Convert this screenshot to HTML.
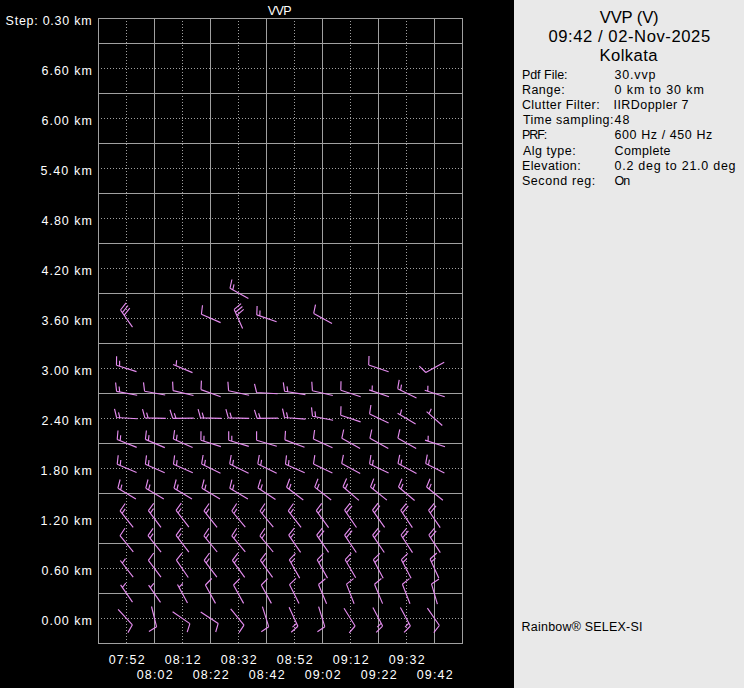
<!DOCTYPE html>
<html><head><meta charset="utf-8"><style>
html,body{margin:0;padding:0;}
body{width:744px;height:688px;background:#000;position:relative;overflow:hidden;font-family:"Liberation Sans",sans-serif;}
#panel{position:absolute;left:514px;top:0;width:230px;height:688px;background:#e9e9e9;}
svg{position:absolute;left:0;top:0;}
.s{stroke:#a0a0a0;stroke-width:1;}
.d{stroke:#a0a0a0;stroke-width:1;stroke-dasharray:1 2;}
.b{stroke:#e48cee;stroke-width:1.15;fill:none;}
.t{position:absolute;white-space:nowrap;}
</style></head><body>
<div id="panel"></div>
<svg width="744" height="688" viewBox="0 0 744 688" shape-rendering="crispEdges">
<line x1="98.5" y1="18" x2="98.5" y2="644" class="s"/>
<line x1="154.5" y1="18" x2="154.5" y2="644" class="s"/>
<line x1="210.5" y1="18" x2="210.5" y2="644" class="s"/>
<line x1="266.5" y1="18" x2="266.5" y2="644" class="s"/>
<line x1="322.5" y1="18" x2="322.5" y2="644" class="s"/>
<line x1="378.5" y1="18" x2="378.5" y2="644" class="s"/>
<line x1="434.5" y1="18" x2="434.5" y2="644" class="s"/>
<line x1="462.5" y1="18" x2="462.5" y2="644" class="s"/>
<line x1="98" y1="18.5" x2="463" y2="18.5" class="s"/>
<line x1="98" y1="43.5" x2="463" y2="43.5" class="s"/>
<line x1="98" y1="93.5" x2="463" y2="93.5" class="s"/>
<line x1="98" y1="143.5" x2="463" y2="143.5" class="s"/>
<line x1="98" y1="193.5" x2="463" y2="193.5" class="s"/>
<line x1="98" y1="243.5" x2="463" y2="243.5" class="s"/>
<line x1="98" y1="293.5" x2="463" y2="293.5" class="s"/>
<line x1="98" y1="343.5" x2="463" y2="343.5" class="s"/>
<line x1="98" y1="393.5" x2="463" y2="393.5" class="s"/>
<line x1="98" y1="443.5" x2="463" y2="443.5" class="s"/>
<line x1="98" y1="493.5" x2="463" y2="493.5" class="s"/>
<line x1="98" y1="543.5" x2="463" y2="543.5" class="s"/>
<line x1="98" y1="593.5" x2="463" y2="593.5" class="s"/>
<line x1="98" y1="643.5" x2="463" y2="643.5" class="s"/>
<line x1="126.5" y1="21" x2="126.5" y2="643" class="d"/>
<line x1="182.5" y1="21" x2="182.5" y2="643" class="d"/>
<line x1="238.5" y1="21" x2="238.5" y2="643" class="d"/>
<line x1="294.5" y1="21" x2="294.5" y2="643" class="d"/>
<line x1="350.5" y1="21" x2="350.5" y2="643" class="d"/>
<line x1="406.5" y1="21" x2="406.5" y2="643" class="d"/>
<line x1="101" y1="68.5" x2="462" y2="68.5" class="d"/>
<line x1="101" y1="118.5" x2="462" y2="118.5" class="d"/>
<line x1="101" y1="168.5" x2="462" y2="168.5" class="d"/>
<line x1="101" y1="218.5" x2="462" y2="218.5" class="d"/>
<line x1="101" y1="268.5" x2="462" y2="268.5" class="d"/>
<line x1="101" y1="318.5" x2="462" y2="318.5" class="d"/>
<line x1="101" y1="368.5" x2="462" y2="368.5" class="d"/>
<line x1="101" y1="418.5" x2="462" y2="418.5" class="d"/>
<line x1="101" y1="468.5" x2="462" y2="468.5" class="d"/>
<line x1="101" y1="518.5" x2="462" y2="518.5" class="d"/>
<line x1="101" y1="568.5" x2="462" y2="568.5" class="d"/>
<line x1="101" y1="618.5" x2="462" y2="618.5" class="d"/>
</svg>
<svg width="744" height="688" viewBox="0 0 744 688">
<path class="b" d="M230.0 288.3L248.4 298.5M230.0 288.3l1.9 -8.8M232.8 289.8l1.2 -5.4"/>
<path class="b" d="M120.5 310.0L132.5 327.2M120.5 310.0l5.6 -7.1M122.4 312.6l5.6 -7.1M124.2 315.2l5.6 -7.1"/>
<path class="b" d="M201.4 314.2L220.6 322.6M201.4 314.2l1.1 -8.9"/>
<path class="b" d="M234.2 309.4L242.6 328.6M234.2 309.4l6.9 -5.8M235.5 312.3l6.9 -5.8M236.8 315.2l6.9 -5.8"/>
<path class="b" d="M256.8 314.9L276.6 321.7M256.8 314.9l0.3 -9.0M259.8 315.9l0.2 -5.5"/>
<path class="b" d="M313.7 313.4L332.0 323.5M313.7 313.4l1.8 -8.8"/>
<path class="b" d="M116.5 365.3L136.5 371.6M116.5 365.3l0.1 -9.0M119.6 366.3l0.0 -5.5"/>
<path class="b" d="M173.1 364.5L192.5 372.6M176.1 365.8l0.5 -5.5"/>
<path class="b" d="M368.7 365.0L388.6 371.8M368.7 365.0l0.3 -9.0"/>
<path class="b" d="M425.8 372.5L444.2 362.3M425.8 372.5l-6.5 -6.3"/>
<path class="b" d="M116.6 391.4L137.2 395.2M116.6 391.4l-1.0 -8.9M119.7 392.0l-0.6 -5.5"/>
<path class="b" d="M144.6 391.3L165.2 395.0M144.6 391.3l-1.1 -8.9"/>
<path class="b" d="M173.1 390.6L193.5 395.5M173.1 390.6l-0.5 -9.0"/>
<path class="b" d="M201.0 389.6L220.7 396.7M201.0 389.6l0.4 -9.0"/>
<path class="b" d="M228.6 390.8L249.1 395.2M228.6 390.8l-0.7 -9.0"/>
<path class="b" d="M256.6 392.5L277.6 393.8M256.6 392.5l-2.1 -8.7"/>
<path class="b" d="M284.6 391.3L305.4 394.6M284.6 391.3l-1.3 -8.9M287.8 391.8l-0.8 -5.4"/>
<path class="b" d="M312.4 390.8L332.8 395.5M312.4 390.8l-0.6 -9.0"/>
<path class="b" d="M340.8 390.2L360.7 396.7M340.8 390.2l0.2 -9.0"/>
<path class="b" d="M369.1 389.9L389.0 396.7M372.1 390.9l0.2 -5.5"/>
<path class="b" d="M397.7 388.7L416.5 398.0M397.7 388.7l1.5 -8.9M400.6 390.1l0.9 -5.4"/>
<path class="b" d="M424.7 390.2L444.7 396.7M427.8 391.2l0.1 -5.5"/>
<path class="b" d="M116.6 417.5L137.5 418.7M116.6 417.5l-2.1 -8.7M119.8 417.7l-1.3 -5.3"/>
<path class="b" d="M144.9 417.9L165.8 418.4M144.9 417.9l-2.4 -8.7M148.1 418.0l-1.5 -5.3"/>
<path class="b" d="M172.8 418.4L193.8 418.1M172.8 418.4l-2.8 -8.6M176.0 418.4l-1.7 -5.2"/>
<path class="b" d="M200.5 417.9L221.5 418.4M200.5 417.9l-2.4 -8.7M203.7 418.0l-1.5 -5.3"/>
<path class="b" d="M228.3 417.9L249.2 418.4M228.3 417.9l-2.4 -8.7M231.5 418.0l-1.5 -5.3"/>
<path class="b" d="M257.1 418.4L278.1 418.1M257.1 418.4l-2.7 -8.6M260.3 418.4l-1.7 -5.2"/>
<path class="b" d="M284.5 417.5L305.5 419.1M284.5 417.5l-2.0 -8.8M287.7 417.7l-1.2 -5.4"/>
<path class="b" d="M312.5 416.3L333.1 420.3M312.5 416.3l-1.0 -8.9M315.6 416.9l-0.6 -5.5"/>
<path class="b" d="M340.7 415.2L360.6 421.9M340.7 415.2l0.3 -9.0"/>
<path class="b" d="M369.6 413.9L388.6 423.0M369.6 413.9l1.3 -8.9"/>
<path class="b" d="M397.6 413.2L415.6 423.9M400.3 414.8l1.3 -5.3"/>
<path class="b" d="M426.6 411.6L442.3 425.5M429.0 413.7l2.3 -5.0"/>
<path class="b" d="M117.2 439.5L136.7 447.4M117.2 439.5l0.8 -9.0M120.2 440.7l0.5 -5.5"/>
<path class="b" d="M145.4 439.4L164.8 447.6M145.4 439.4l1.0 -8.9M148.4 440.6l0.6 -5.5"/>
<path class="b" d="M173.4 439.0L192.6 447.6M173.4 439.0l1.2 -8.9M176.4 440.3l0.7 -5.5"/>
<path class="b" d="M200.9 440.3L220.9 446.6M200.9 440.3l0.1 -9.0M203.9 441.2l0.1 -5.5"/>
<path class="b" d="M228.7 440.2L248.8 446.4M228.7 440.2l0.0 -9.0M231.8 441.2l0.0 -5.5"/>
<path class="b" d="M256.6 440.3L276.8 446.3M256.6 440.3l-0.0 -9.0"/>
<path class="b" d="M284.9 439.9L304.5 447.3M284.9 439.9l0.6 -9.0"/>
<path class="b" d="M313.4 438.9L332.5 447.7M313.4 438.9l1.2 -8.9"/>
<path class="b" d="M341.8 438.3L360.1 448.4M341.8 438.3l1.9 -8.8"/>
<path class="b" d="M369.9 438.3L388.3 448.4M369.9 438.3l1.9 -8.8"/>
<path class="b" d="M397.9 438.2L416.2 448.5M397.9 438.2l1.9 -8.8"/>
<path class="b" d="M425.0 440.1L445.0 446.8M428.1 441.2l0.1 -5.5"/>
<path class="b" d="M117.2 464.2L136.6 472.5M117.2 464.2l1.0 -8.9M120.2 465.5l0.6 -5.5"/>
<path class="b" d="M145.4 464.3L164.7 472.7M145.4 464.3l1.1 -8.9M148.4 465.6l0.6 -5.5"/>
<path class="b" d="M173.5 464.3L192.8 472.7M173.5 464.3l1.1 -8.9M176.5 465.6l0.6 -5.5"/>
<path class="b" d="M201.6 463.9L220.5 473.2M201.6 463.9l1.5 -8.9M204.5 465.3l0.9 -5.4"/>
<path class="b" d="M229.7 463.9L248.6 473.2M229.7 463.9l1.5 -8.9M232.6 465.3l0.9 -5.4"/>
<path class="b" d="M257.8 463.9L276.7 473.2M257.8 463.9l1.5 -8.9M260.7 465.3l0.9 -5.4"/>
<path class="b" d="M285.5 464.3L304.7 472.7M285.5 464.3l1.0 -8.9M288.4 465.6l0.6 -5.5"/>
<path class="b" d="M313.5 464.0L332.4 472.9M313.5 464.0l1.3 -8.9"/>
<path class="b" d="M341.7 463.6L360.2 473.5M341.7 463.6l1.7 -8.8"/>
<path class="b" d="M369.6 463.9L388.6 473.0M369.6 463.9l1.3 -8.9M372.5 465.3l0.8 -5.4"/>
<path class="b" d="M398.0 463.6L416.5 473.5M398.0 463.6l1.7 -8.8M400.8 465.1l1.0 -5.4"/>
<path class="b" d="M425.7 463.6L444.4 473.1M425.7 463.6l1.6 -8.9M428.5 465.0l0.9 -5.4"/>
<path class="b" d="M117.9 488.2L135.9 499.1M117.9 488.2l2.2 -8.7M120.6 489.9l1.3 -5.3"/>
<path class="b" d="M145.8 488.2L163.8 499.1M145.8 488.2l2.2 -8.7M148.6 489.8l1.4 -5.3"/>
<path class="b" d="M174.0 488.2L192.0 499.1M174.0 488.2l2.2 -8.7M176.8 489.8l1.4 -5.3"/>
<path class="b" d="M201.9 488.2L220.0 499.1M201.9 488.2l2.2 -8.7M204.7 489.9l1.3 -5.3"/>
<path class="b" d="M229.8 488.3L247.9 499.0M229.8 488.3l2.1 -8.7M232.6 489.9l1.3 -5.3"/>
<path class="b" d="M258.0 487.9L275.5 499.6M258.0 487.9l2.6 -8.6M260.7 489.7l1.6 -5.3"/>
<path class="b" d="M286.6 487.3L303.3 500.0M286.6 487.3l3.1 -8.5M289.1 489.2l1.9 -5.2"/>
<path class="b" d="M314.7 487.1L331.2 500.0M314.7 487.1l3.3 -8.4M317.2 489.0l2.0 -5.1"/>
<path class="b" d="M343.0 486.7L358.9 500.4M343.0 486.7l3.6 -8.3M345.4 488.8l2.2 -5.0"/>
<path class="b" d="M370.5 487.0L386.9 500.1M370.5 487.0l3.3 -8.4M373.0 489.0l2.0 -5.1"/>
<path class="b" d="M398.5 487.0L414.6 500.5M398.5 487.0l3.5 -8.3M400.9 489.1l2.1 -5.1"/>
<path class="b" d="M426.6 487.0L442.9 500.3M426.6 487.0l3.4 -8.3M429.1 489.0l2.1 -5.1"/>
<path class="b" d="M120.1 510.9L133.2 527.3M120.1 510.9l5.1 -7.4M122.1 513.4l3.1 -4.5"/>
<path class="b" d="M148.4 510.6L161.0 527.3M148.4 510.6l5.3 -7.3M150.3 513.1l3.2 -4.4"/>
<path class="b" d="M176.1 510.4L188.9 527.1M176.1 510.4l5.2 -7.3M178.0 513.0l3.2 -4.5"/>
<path class="b" d="M204.0 510.9L217.1 527.3M204.0 510.9l5.1 -7.4M206.0 513.4l3.1 -4.6"/>
<path class="b" d="M231.8 511.0L245.3 527.2M231.8 511.0l4.9 -7.5M233.9 513.5l3.0 -4.6"/>
<path class="b" d="M260.0 511.0L273.3 527.2M260.0 511.0l5.0 -7.5M262.0 513.4l3.1 -4.6"/>
<path class="b" d="M288.3 510.8L301.1 527.4M288.3 510.8l5.2 -7.3M290.3 513.3l3.2 -4.5"/>
<path class="b" d="M316.3 510.6L328.6 527.6M316.3 510.6l5.4 -7.2M318.2 513.2l3.3 -4.4"/>
<path class="b" d="M344.6 510.1L356.5 527.5M344.6 510.1l5.6 -7.0M346.4 512.8l5.6 -7.0"/>
<path class="b" d="M372.5 510.2L384.6 527.4M372.5 510.2l5.5 -7.1M374.4 512.8l5.5 -7.1"/>
<path class="b" d="M400.7 510.3L412.4 527.6M400.7 510.3l5.7 -7.0M402.5 512.9l5.7 -7.0"/>
<path class="b" d="M428.5 510.3L440.2 527.6M428.5 510.3l5.7 -7.0M430.3 512.9l5.7 -7.0"/>
<path class="b" d="M120.0 535.7L133.3 551.8M120.0 535.7l5.0 -7.5"/>
<path class="b" d="M148.0 535.7L161.1 552.1M148.0 535.7l5.1 -7.4M150.0 538.2l3.1 -4.5"/>
<path class="b" d="M176.1 535.4L188.9 552.1M176.1 535.4l5.2 -7.3M178.0 538.0l3.2 -4.5"/>
<path class="b" d="M203.9 535.8L217.2 552.0M203.9 535.8l5.0 -7.5M205.9 538.3l3.0 -4.6"/>
<path class="b" d="M231.8 535.9L245.3 551.9M231.8 535.9l4.9 -7.6M233.8 538.3l3.0 -4.6"/>
<path class="b" d="M259.9 535.8L273.2 552.0M259.9 535.8l5.0 -7.5M261.9 538.3l3.0 -4.6"/>
<path class="b" d="M288.7 535.2L300.6 552.4M288.7 535.2l5.6 -7.1M290.5 537.8l3.4 -4.3"/>
<path class="b" d="M316.7 535.2L328.6 552.4M316.7 535.2l5.6 -7.1M318.5 537.8l5.6 -7.1"/>
<path class="b" d="M344.6 535.1L356.3 552.5M344.6 535.1l5.7 -7.0M346.4 537.7l5.7 -7.0"/>
<path class="b" d="M372.6 535.1L384.3 552.5M372.6 535.1l5.7 -7.0M374.4 537.7l5.7 -7.0"/>
<path class="b" d="M401.0 535.0L412.5 552.6M401.0 535.0l5.7 -6.9M402.7 537.7l5.7 -6.9"/>
<path class="b" d="M428.8 535.0L440.3 552.6M428.8 535.0l5.7 -6.9M430.5 537.7l5.7 -6.9"/>
<path class="b" d="M120.3 560.5L133.2 577.1M122.3 563.1l3.2 -4.5"/>
<path class="b" d="M148.4 560.3L161.0 577.1M148.4 560.3l5.3 -7.3"/>
<path class="b" d="M176.4 560.2L188.3 577.5M176.4 560.2l5.6 -7.1"/>
<path class="b" d="M204.2 560.3L216.9 577.1M204.2 560.3l5.3 -7.3M206.2 562.9l3.2 -4.4"/>
<path class="b" d="M232.4 560.3L244.7 577.4M232.4 560.3l5.5 -7.1M234.3 562.9l3.3 -4.4"/>
<path class="b" d="M260.4 560.3L272.6 577.4M260.4 560.3l5.5 -7.1M262.3 562.9l3.4 -4.4"/>
<path class="b" d="M289.3 559.8L299.7 578.1M289.3 559.8l6.2 -6.5M290.9 562.6l3.8 -4.0"/>
<path class="b" d="M317.2 559.8L327.5 578.1M317.2 559.8l6.2 -6.5M318.8 562.6l3.8 -4.0"/>
<path class="b" d="M345.2 559.7L355.7 577.8M345.2 559.7l6.1 -6.6M346.8 562.4l3.7 -4.0"/>
<path class="b" d="M373.4 559.7L383.2 578.2M373.4 559.7l6.4 -6.4M374.9 562.5l3.9 -3.9"/>
<path class="b" d="M401.4 559.7L411.1 578.2M401.4 559.7l6.4 -6.3M402.9 562.5l3.9 -3.9"/>
<path class="b" d="M430.1 559.0L438.8 578.1M430.1 559.0l6.7 -6.0M431.4 561.9l4.1 -3.7"/>
<path class="b" d="M120.6 584.9L132.5 602.2M122.4 587.5l3.4 -4.3"/>
<path class="b" d="M148.6 585.1L160.5 602.4M150.4 587.7l3.4 -4.3"/>
<path class="b" d="M177.5 584.6L187.5 603.0M179.0 587.4l3.8 -3.9"/>
<path class="b" d="M205.4 585.0L215.5 603.4M205.4 585.0l6.3 -6.5"/>
<path class="b" d="M233.5 585.0L243.6 603.4M233.5 585.0l6.3 -6.4"/>
<path class="b" d="M261.3 585.0L271.4 603.4M261.3 585.0l6.3 -6.4"/>
<path class="b" d="M289.5 584.6L299.0 603.4M289.5 584.6l6.5 -6.3"/>
<path class="b" d="M318.5 584.5L326.6 603.8M318.5 584.5l6.9 -5.8"/>
<path class="b" d="M346.5 584.1L354.1 603.8M346.5 584.1l7.1 -5.5"/>
<path class="b" d="M374.5 584.3L382.6 603.6M374.5 584.3l6.9 -5.8"/>
<path class="b" d="M402.4 584.2L410.0 603.7M402.4 584.2l7.0 -5.6"/>
<path class="b" d="M431.5 583.9L437.4 604.1M431.5 583.9l7.5 -5.0"/>
<path class="b" d="M132.4 624.8L118.1 609.4M132.4 624.8l-4.5 7.8"/>
<path class="b" d="M156.6 626.8L151.5 606.5M156.6 626.8l-7.7 4.6"/>
<path class="b" d="M189.9 623.6L172.6 611.7M189.9 623.6l-2.7 8.6"/>
<path class="b" d="M218.2 623.4L200.7 611.9M218.2 623.4l-2.5 8.6"/>
<path class="b" d="M244.0 625.1L230.7 608.8M244.0 625.1l-5.0 7.5"/>
<path class="b" d="M268.7 626.7L262.4 606.7M268.7 626.7l-7.4 5.1"/>
<path class="b" d="M297.9 626.3L289.1 607.3M297.9 626.3l-6.7 6.0M296.6 623.4l-4.1 3.7"/>
<path class="b" d="M324.8 626.7L318.6 606.7M324.8 626.7l-7.4 5.1"/>
<path class="b" d="M355.1 626.0L344.0 608.2M355.1 626.0l-5.9 6.8"/>
<path class="b" d="M382.6 626.1L372.9 607.5M382.6 626.1l-6.4 6.3M381.1 623.3l-3.9 3.8"/>
<path class="b" d="M410.4 626.0L400.4 607.6M410.4 626.0l-6.3 6.4M408.9 623.2l-3.9 3.9"/>
<path class="b" d="M439.4 625.5L427.4 608.2M439.4 625.5l-5.6 7.1"/>
</svg>
<div class="t" id="t0" style="top:14px;left:5.60px;font-size:12.48px;line-height:14px;color:#fff;letter-spacing:0.751px">Step: 0.30 km</div>
<div class="t" id="t1" style="top:64px;left:41.50px;font-size:12.48px;line-height:14px;color:#fff;letter-spacing:0.999px">6.60 km</div>
<div class="t" id="t2" style="top:114px;left:41.50px;font-size:12.48px;line-height:14px;color:#fff;letter-spacing:0.999px">6.00 km</div>
<div class="t" id="t3" style="top:164px;left:40.50px;font-size:12.48px;line-height:14px;color:#fff;letter-spacing:1.166px">5.40 km</div>
<div class="t" id="t4" style="top:214px;left:41.50px;font-size:12.48px;line-height:14px;color:#fff;letter-spacing:0.999px">4.80 km</div>
<div class="t" id="t5" style="top:264px;left:41.50px;font-size:12.48px;line-height:14px;color:#fff;letter-spacing:0.999px">4.20 km</div>
<div class="t" id="t6" style="top:314px;left:41.50px;font-size:12.48px;line-height:14px;color:#fff;letter-spacing:0.999px">3.60 km</div>
<div class="t" id="t7" style="top:364px;left:41.50px;font-size:12.48px;line-height:14px;color:#fff;letter-spacing:0.999px">3.00 km</div>
<div class="t" id="t8" style="top:414px;left:41.50px;font-size:12.48px;line-height:14px;color:#fff;letter-spacing:0.999px">2.40 km</div>
<div class="t" id="t9" style="top:464px;left:40.50px;font-size:12.48px;line-height:14px;color:#fff;letter-spacing:1.167px">1.80 km</div>
<div class="t" id="t10" style="top:514px;left:40.50px;font-size:12.48px;line-height:14px;color:#fff;letter-spacing:1.167px">1.20 km</div>
<div class="t" id="t11" style="top:564px;left:41.50px;font-size:12.48px;line-height:14px;color:#fff;letter-spacing:0.999px">0.60 km</div>
<div class="t" id="t12" style="top:614px;left:41.50px;font-size:12.48px;line-height:14px;color:#fff;letter-spacing:0.999px">0.00 km</div>
<div class="t" id="t13" style="top:652.5px;left:108.69px;font-size:12.48px;line-height:14px;color:#fff;letter-spacing:1.200px">07:52</div>
<div class="t" id="t14" style="top:667.5px;left:136.69px;font-size:12.48px;line-height:14px;color:#fff;letter-spacing:1.200px">08:02</div>
<div class="t" id="t15" style="top:652.5px;left:164.69px;font-size:12.48px;line-height:14px;color:#fff;letter-spacing:1.200px">08:12</div>
<div class="t" id="t16" style="top:667.5px;left:192.69px;font-size:12.48px;line-height:14px;color:#fff;letter-spacing:1.200px">08:22</div>
<div class="t" id="t17" style="top:652.5px;left:220.69px;font-size:12.48px;line-height:14px;color:#fff;letter-spacing:1.200px">08:32</div>
<div class="t" id="t18" style="top:667.5px;left:248.69px;font-size:12.48px;line-height:14px;color:#fff;letter-spacing:1.200px">08:42</div>
<div class="t" id="t19" style="top:652.5px;left:276.69px;font-size:12.48px;line-height:14px;color:#fff;letter-spacing:1.200px">08:52</div>
<div class="t" id="t20" style="top:667.5px;left:304.69px;font-size:12.48px;line-height:14px;color:#fff;letter-spacing:1.200px">09:02</div>
<div class="t" id="t21" style="top:652.5px;left:332.69px;font-size:12.48px;line-height:14px;color:#fff;letter-spacing:1.200px">09:12</div>
<div class="t" id="t22" style="top:667.5px;left:360.69px;font-size:12.48px;line-height:14px;color:#fff;letter-spacing:1.200px">09:22</div>
<div class="t" id="t23" style="top:652.5px;left:388.69px;font-size:12.48px;line-height:14px;color:#fff;letter-spacing:1.200px">09:32</div>
<div class="t" id="t24" style="top:667.5px;left:416.69px;font-size:12.48px;line-height:14px;color:#fff;letter-spacing:1.200px">09:42</div>
<div class="t" id="t25" style="top:4px;left:267.69px;font-size:12.48px;line-height:14px;color:#fff;letter-spacing:-0.500px">VVP</div>
<div class="t" id="t26" style="top:9px;left:599.70px;font-size:16.64px;line-height:18px;color:#000;letter-spacing:-0.133px">VVP (V)</div>
<div class="t" id="t27" style="top:27.5px;left:548.39px;font-size:16.64px;line-height:18px;color:#000;letter-spacing:0.567px">09:42 / 02-Nov-2025</div>
<div class="t" id="t28" style="top:47px;left:599.50px;font-size:16.64px;line-height:18px;color:#000;letter-spacing:0.432px">Kolkata</div>
<div class="t" id="t29" style="top:68.0px;left:521.89px;font-size:12.48px;line-height:14px;color:#000;letter-spacing:-0.003px">Pdf File:</div>
<div class="t" id="t30" style="top:68.0px;left:614.50px;font-size:12.48px;line-height:14px;color:#000;letter-spacing:0.840px">30.vvp</div>
<div class="t" id="t31" style="top:83.1px;left:521.89px;font-size:12.48px;line-height:14px;color:#000;letter-spacing:0.520px">Range:</div>
<div class="t" id="t32" style="top:83.1px;left:614.50px;font-size:12.48px;line-height:14px;color:#000;letter-spacing:0.916px">0 km to 30 km</div>
<div class="t" id="t33" style="top:98.2px;left:521.89px;font-size:12.48px;line-height:14px;color:#000;letter-spacing:0.457px">Clutter Filter:</div>
<div class="t" id="t34" style="top:98.2px;left:613.50px;font-size:12.48px;line-height:14px;color:#000;letter-spacing:0.455px">IIRDoppler 7</div>
<div class="t" id="t35" style="top:113.3px;left:522.89px;font-size:12.48px;line-height:14px;color:#000;letter-spacing:0.506px">Time sampling:</div>
<div class="t" id="t36" style="top:113.3px;left:614.50px;font-size:12.48px;line-height:14px;color:#000;letter-spacing:1.000px">48</div>
<div class="t" id="t37" style="top:128.4px;left:521.89px;font-size:12.48px;line-height:14px;color:#000;letter-spacing:-0.999px">PRF:</div>
<div class="t" id="t38" style="top:128.4px;left:614.50px;font-size:12.48px;line-height:14px;color:#000;letter-spacing:0.600px">600 Hz / 450 Hz</div>
<div class="t" id="t39" style="top:143.5px;left:522.89px;font-size:12.48px;line-height:14px;color:#000;letter-spacing:0.550px">Alg type:</div>
<div class="t" id="t40" style="top:143.5px;left:614.50px;font-size:12.48px;line-height:14px;color:#000;letter-spacing:0.371px">Complete</div>
<div class="t" id="t41" style="top:158.6px;left:521.89px;font-size:12.48px;line-height:14px;color:#000;letter-spacing:0.444px">Elevation:</div>
<div class="t" id="t42" style="top:158.6px;left:614.50px;font-size:12.48px;line-height:14px;color:#000;letter-spacing:0.755px">0.2 deg to 21.0 deg</div>
<div class="t" id="t43" style="top:173.7px;left:521.89px;font-size:12.48px;line-height:14px;color:#000;letter-spacing:0.620px">Second reg:</div>
<div class="t" id="t44" style="top:173.7px;left:614.50px;font-size:12.48px;line-height:14px;color:#000;letter-spacing:-1.000px">On</div>
<div class="t" id="t45" style="top:620px;left:521.60px;font-size:12.48px;line-height:14px;color:#000;letter-spacing:0.224px">Rainbow® SELEX-SI</div>

</body></html>
